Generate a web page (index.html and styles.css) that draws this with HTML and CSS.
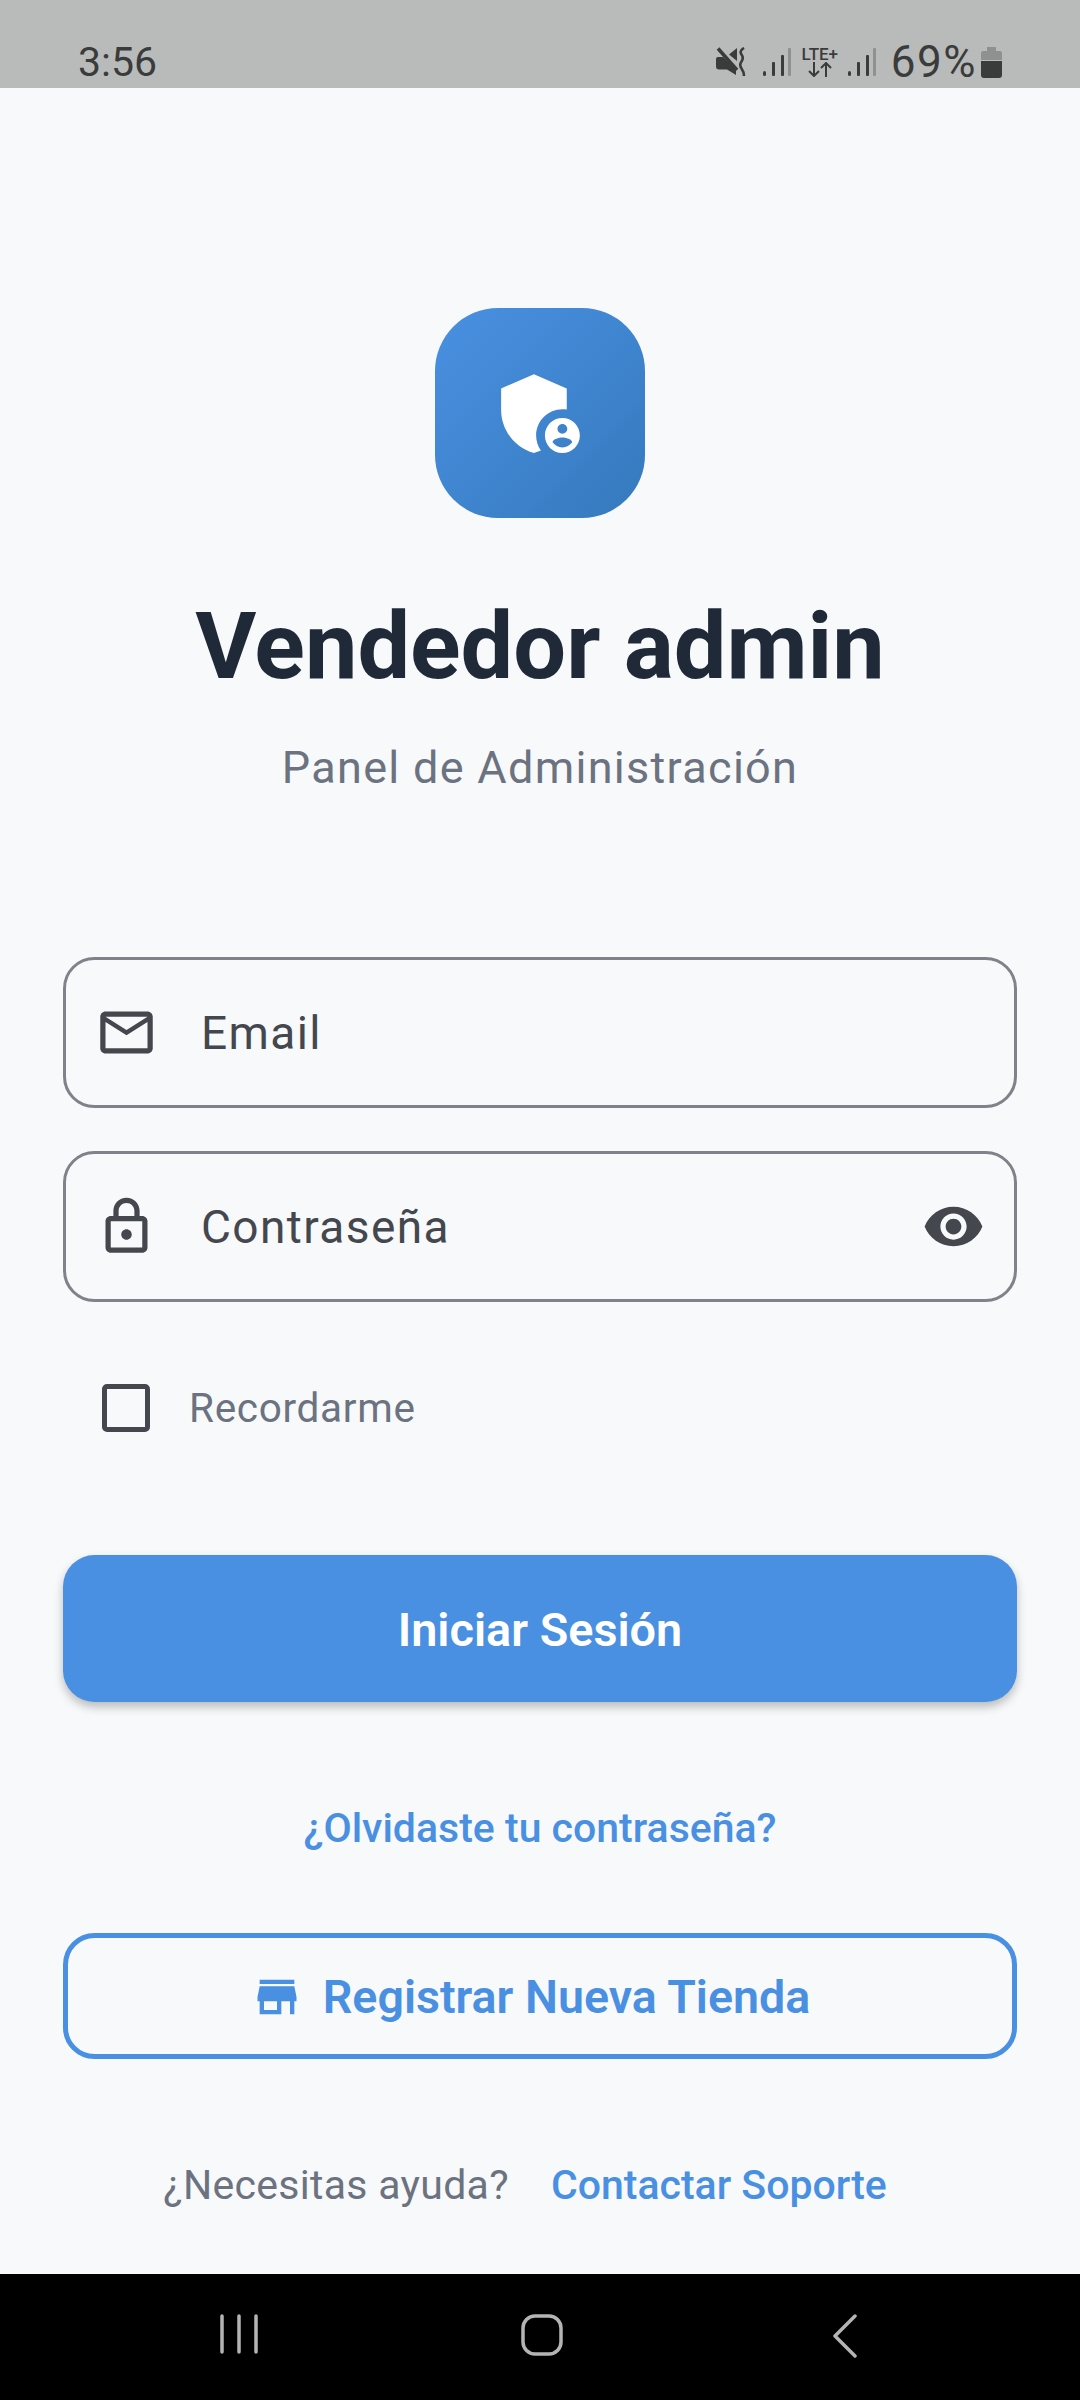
FILE: index.html
```html
<!DOCTYPE html>
<html lang="es">
<head>
    <meta charset="UTF-8">
    <title>Vendedor admin</title>
    <link rel="stylesheet" href="styles.css">
</head>
<body>
    <div class="status-bar">
        <span class="status-time">3:56</span>
        <div class="status-icons">
            <svg class="ic-mute" viewBox="0 0 30 30" width="30" height="30">
                <path fill="#3a3c3c" d="M2 10h5L20 22.500V28l-9-5.500H3q-3 0-3-3V12q0-2 2-2zM13 7.500L21 1V14z"/>
                <path stroke="#3a3c3c" stroke-width="3.500" fill="none" d="M2 1.500L21 23"/>
                <path stroke="#3a3c3c" stroke-width="2.600" fill="none" d="M28 1q-5 3-2.500 6.500t0 7 0 7 2.500 7.500"/>
            </svg>
            <svg class="ic-signal" viewBox="0 0 29 30" width="29" height="30">
                <rect x="0" y="24" width="3" height="5" rx="1.500" fill="#3a3c3c"/>
                <rect x="9" y="15" width="3" height="14" rx="1" fill="#3a3c3c"/>
                <rect x="18" y="8" width="3" height="21" rx="1" fill="#3a3c3c"/>
                <rect x="25" y="1" width="3" height="28" rx="1" fill="#8f9190"/>
            </svg>
            <div class="lte">
                <span class="lte-text">LTE+</span>
                <svg viewBox="0 0 24 15" width="24" height="15">
                    <path stroke="#3a3c3c" stroke-width="2" fill="none" d="M6 0V14M1 9l5 5 5-5M18 15V1M13 6l5-5 5 5"/>
                </svg>
            </div>
            <svg class="ic-signal" viewBox="0 0 29 30" width="29" height="30">
                <rect x="0" y="24" width="3" height="5" rx="1.500" fill="#3a3c3c"/>
                <rect x="9" y="15" width="3" height="14" rx="1" fill="#3a3c3c"/>
                <rect x="18" y="8" width="3" height="21" rx="1" fill="#3a3c3c"/>
                <rect x="25" y="1" width="3" height="28" rx="1" fill="#8f9190"/>
            </svg>
            <span class="status-pct">69%</span>
            <svg class="ic-batt" viewBox="0 0 21 31" width="21" height="31">
                <path fill="#8f9190" d="M6 0h9v4h4q2 0 2 2v7H0V6q0-2 2-2h4z"/>
                <path fill="#3a3c3c" d="M0 14h21v14q0 3-3 3H3q-3 0-3-3z"/>
            </svg>
        </div>
    </div>

    <div class="page">
        <div class="logo">
            <svg viewBox="0 0 24 24" width="105" height="105">
                <path fill="#fff" d="M17,11c0.34,0,0.67,0.04,1,0.09V6.27L10.5,3L3,6.27v4.91c0,4.54,3.2,8.79,7.5,9.82c0.55-0.13,1.08-0.32,1.6-0.55C11.41,19.47,11,18.28,11,17C11,13.69,13.69,11,17,11z"/>
                <path fill="#fff" d="M17,13c-2.21,0-4,1.79-4,4c0,2.21,1.79,4,4,4s4-1.79,4-4C21,14.79,19.21,13,17,13z M17,14.38c0.62,0,1.12,0.51,1.12,1.12s-0.51,1.12-1.12,1.12s-1.12-0.51-1.12-1.12S16.38,14.38,17,14.38z M17,19.75c-0.93,0-1.74-0.46-2.24-1.17c0.05-0.72,1.51-1.08,2.24-1.08s2.19,0.36,2.24,1.08C18.74,19.29,17.93,19.75,17,19.75z"/>
            </svg>
        </div>
        <h1 class="title">Vendedor admin</h1>
        <p class="subtitle">Panel de Administración</p>

        <div class="field field-email">
            <svg class="field-icon" viewBox="0 0 24 24" width="63" height="63">
                <path d="M20 4H4c-1.100 0-1.990.9-1.990 2L2 18c0 1.100.9 2 2 2h16c1.100 0 2-.9 2-2V6c0-1.100-.9-2-2-2zm0 14H4V8l8 5 8-5v10zm-8-7L4 6h16l-8 5z"/>
            </svg>
            <span class="field-label">Email</span>
        </div>
        <div class="field field-pass">
            <svg class="field-icon" viewBox="0 0 24 24" width="63" height="63">
                <path d="M18 8h-1V6c0-2.760-2.240-5-5-5S7 3.240 7 6v2H6c-1.100 0-2 .9-2 2v10c0 1.100.9 2 2 2h12c1.100 0 2-.9 2-2V10c0-1.100-.9-2-2-2zM9 6c0-1.660 1.340-3 3-3s3 1.340 3 3v2H9V6zm9 14H6V10h12v10zm-6-3c1.100 0 2-.9 2-2s-.9-2-2-2-2 .9-2 2 .9 2 2 2z"/>
            </svg>
            <span class="field-label">Contraseña</span>
            <svg class="field-eye" viewBox="0 0 24 24" width="63" height="63">
                <path d="M12 4.500C7 4.500 2.730 7.610 1 12c1.730 4.390 6 7.500 11 7.500s9.270-3.110 11-7.500c-1.730-4.390-6-7.500-11-7.500zM12 17c-2.760 0-5-2.240-5-5s2.240-5 5-5 5 2.240 5 5-2.240 5-5 5zm0-8c-1.660 0-3 1.340-3 3s1.340 3 3 3 3-1.340 3-3-1.340-3-3-3z"/>
            </svg>
        </div>

        <div class="remember">
            <span class="checkbox"></span>
            <span class="remember-label">Recordarme</span>
        </div>

        <div class="btn-primary">Iniciar Sesión</div>
        <div class="forgot">¿Olvidaste tu contraseña?</div>
        <div class="btn-outline">
            <svg viewBox="0 0 24 24" width="52" height="52">
                <path d="M20 4H4v2h16V4zm1 10v-2l-1-5H4l-1 5v2h1v6h10v-6h4v6h2v-6h1zm-9 4H6v-4h6v4z"/>
            </svg>
            <span>Registrar Nueva Tienda</span>
        </div>
        <div class="help">
            <span class="help-q">¿Necesitas ayuda?</span>
            <span class="help-link">Contactar Soporte</span>
        </div>
    </div>

    <div class="nav-bar">
        <svg viewBox="0 0 38 40" width="38" height="40">
            <path stroke="#b4b4b4" stroke-width="3.500" stroke-linecap="round" fill="none" d="M2 2V38M19 2V38M36 2V38"/>
        </svg>
        <svg viewBox="0 0 42 42" width="42" height="42">
            <rect x="2" y="2" width="38" height="38" rx="12" stroke="#b4b4b4" stroke-width="3.500" fill="none"/>
        </svg>
        <svg viewBox="0 0 24 44" width="24" height="44">
            <path stroke="#b4b4b4" stroke-width="3.500" stroke-linecap="round" stroke-linejoin="round" fill="none" d="M22 2L2 22 22 42"/>
        </svg>
    </div>
</body>
</html>
```
FILE: styles.css
```css
*{
    padding: 0;
    margin: 0;
    box-sizing: border-box;
}
body{
    width: 1080px;
    height: 2400px;
    display: flex;
    flex-direction: column;
    background: #f8f9fb;
    font-family: Roboto, "Noto Sans", sans-serif;
    overflow: hidden;
}

/* status bar */
.status-bar{
    height: 88px;
    background: #b9bbba;
    display: flex;
    justify-content: space-between;
    align-items: flex-end;
    padding: 0 78px 6px 78px;
    color: #3a3c3c;
}
.status-time{
    font-size: 41px;
    line-height: 40px;
}
.status-icons{
    display: flex;
    align-items: center;
}
.ic-signal{
    margin-left: 17px;
}
.lte{
    margin-left: 9px;
    width: 38px;
    display: flex;
    flex-direction: column;
    align-items: center;
}
.lte-text{
    font-size: 17px;
    line-height: 15px;
    font-weight: 500;
    white-space: nowrap;
}
.lte + .ic-signal{
    margin-left: 9px;
}
.status-pct{
    font-size: 44px;
    letter-spacing: 1.500px;
    line-height: 40px;
    margin-left: 14px;
}
.ic-batt{
    margin-left: 4px;
}

/* main column */
.page{
    flex: 1;
    display: flex;
    flex-direction: column;
    align-items: center;
    padding: 0 63px;
}
.logo{
    width: 210px;
    height: 210px;
    margin-top: 220px;
    border-radius: 63px;
    background: linear-gradient(135deg, #4a90e2, #357abd);
    display: flex;
    align-items: center;
    justify-content: center;
}
.title{
    margin-top: 82px;
    font-size: 93.600px;
    line-height: 92px;
    font-weight: 700;
    color: #1f2937;
}
.subtitle{
    margin-top: 51px;
    font-size: 45px;
    line-height: 50px;
    letter-spacing: 1.300px;
    color: #6b7280;
}
.field{
    width: 100%;
    height: 151px;
    border: 3px solid #7f8289;
    border-radius: 31.500px;
    display: flex;
    align-items: center;
    padding-left: 29px;
    padding-right: 29px;
}
.field-email{
    margin-top: 164px;
}
.field-pass{
    margin-top: 43px;
}
.field-icon,.field-eye{
    fill: #44484e;
    flex: none;
}
.field-label{
    margin-left: 43px;
    font-size: 46px;
    letter-spacing: 1.400px;
    color: #44484e;
}
.field-eye{
    margin-left: auto;
}
.remember{
    width: 100%;
    height: 126px;
    margin-top: 43px;
    padding-left: 39px;
    display: flex;
    align-items: center;
}
.checkbox{
    width: 48px;
    height: 48px;
    border: 5.250px solid #44484e;
    border-radius: 5px;
}
.remember-label{
    margin-left: 39px;
    font-size: 40.500px;
    letter-spacing: 0.700px;
    color: #6b7280;
}
.btn-primary{
    width: 100%;
    height: 147px;
    margin-top: 84px;
    padding-top: 2px;
    border-radius: 31.500px;
    background: #4a90e2;
    color: #fff;
    font-size: 46.800px;
    font-weight: 600;
    display: flex;
    align-items: center;
    justify-content: center;
    box-shadow: 0 5px 10px rgba(0, 0, 0, 0.25);
}
.forgot{
    margin-top: 101px;
    font-size: 41px;
    line-height: 50px;
    font-weight: 500;
    color: #4a90e2;
}
.btn-outline{
    width: 100%;
    height: 126px;
    margin-top: 80px;
    padding-top: 2px;
    padding-right: 19px;
    border: 5.250px solid #4a90e2;
    border-radius: 31.500px;
    color: #4a90e2;
    font-size: 46.600px;
    font-weight: 600;
    display: flex;
    align-items: center;
    justify-content: center;
    gap: 20px;
}
.btn-outline svg{
    fill: #4a90e2;
}
.help{
    margin-top: 101px;
    margin-right: 30px;
    font-size: 41px;
    line-height: 50px;
    display: flex;
    gap: 42px;
}
.help-q{
    color: #6b7280;
    letter-spacing: 0.300px;
}
.help-link{
    font-weight: 500;
    color: #4a90e2;
}

/* nav bar */
.nav-bar{
    height: 126px;
    background: #000;
    display: grid;
    grid-template-columns: 302px 304px 302px;
    padding-left: 88px;
    justify-items: center;
    align-items: start;
    padding-top: 40px;
}
```
